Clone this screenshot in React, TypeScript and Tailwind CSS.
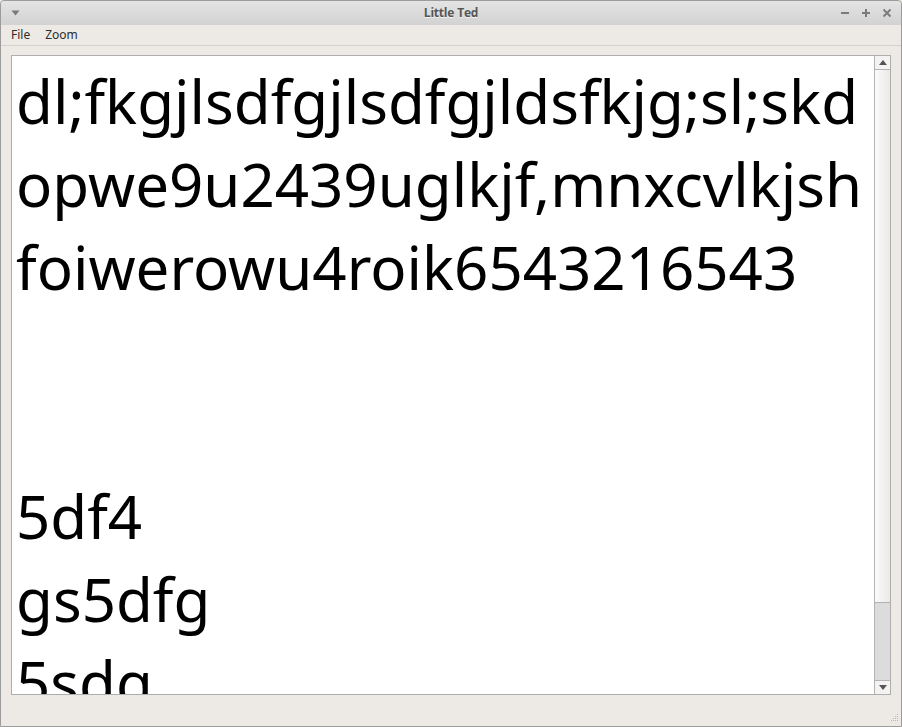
import React from "react";

const LINES = [
  "dl;fkgjlsdfgjlsdfgjldsfkjg;sl;skd",
  "opwe9u2439uglkjf,mnxcvlkjsh",
  "foiwerowu4roik6543216543",
  "",
  "",
  "5df4",
  "gs5dfg",
  "5sdg",
];

function TitleBar() {
  return (
    <div className="relative flex h-[24px] items-center bg-gradient-to-b from-[#e4e4e4] to-[#d2d2d2] rounded-t-[4px]">
      <svg className="ml-[10px]" width="9" height="6" viewBox="0 0 9 6">
        <path d="M0.5 0.5 H8.5 L4.5 5.5 Z" fill="#7a7a7a" />
      </svg>
      <div className="absolute inset-x-0 top-0 flex h-[24px] items-center justify-center text-[12px] font-bold text-[#555] [text-shadow:0_1px_0_#f2f2f2] [font-family:'Open_Sans','Noto_Sans',sans-serif] tracking-[-0.2px]">
        Little Ted
      </div>
      <div className="ml-auto mr-[9px] flex items-center gap-[11px]">
        <svg width="10" height="10" viewBox="0 0 10 10">
          <path d="M1 5 H9" stroke="#7a7a7a" strokeWidth="2" />
        </svg>
        <svg width="10" height="10" viewBox="0 0 10 10">
          <path d="M1 5 H9 M5 1 V9" stroke="#7a7a7a" strokeWidth="2" />
        </svg>
        <svg width="10" height="10" viewBox="0 0 10 10">
          <path d="M1.5 1.5 L8.5 8.5 M8.5 1.5 L1.5 8.5" stroke="#7a7a7a" strokeWidth="1.8" />
        </svg>
      </div>
    </div>
  );
}

function MenuBar() {
  return (
    <div className="flex h-[21px] items-center gap-[15px] border-b border-[#d4d0cb] px-[10px] text-[12px] text-[#2c2c2c] [font-family:'Noto_Sans',sans-serif]">
      <span>File</span>
      <span>Zoom</span>
    </div>
  );
}

function ScrollBar() {
  return (
    <div className="flex w-[16px] flex-col border-l border-[#b4b4b4] bg-[#dcdcdc]">
      <div className="flex h-[14px] items-center justify-center border-b border-[#b4b4b4] bg-[#f4f3f1]">
        <svg width="8" height="5" viewBox="0 0 8 5">
          <path d="M0 5 L4 0 L8 5 Z" fill="#555" />
        </svg>
      </div>
      <div className="h-[533px] border-b border-[#b0b0b0] bg-gradient-to-r from-[#fbfbfa] to-[#ebe9e6]" />
      <div className="flex-1" />
      <div className="flex h-[14px] items-center justify-center border-t border-[#b4b4b4] bg-[#f4f3f1]">
        <svg width="8" height="5" viewBox="0 0 8 5">
          <path d="M0 0 L8 0 L4 5 Z" fill="#555" />
        </svg>
      </div>
    </div>
  );
}

export default function App() {
  return (
    <div className="h-[727px] w-[902px] overflow-hidden bg-[#edeae6]">
      <div className="flex h-full flex-col rounded-t-[4px] border border-[#9c9c9c]">
        <TitleBar />
        <MenuBar />
        <div className="flex flex-1 flex-col px-[10px] pt-[9px] pb-[31px]">
          <div className="flex h-[640px] overflow-hidden border border-[#aeaeae] bg-white">
            <div className="flex-1 overflow-hidden pl-[4px] pt-[4px] text-[60px] leading-[83px] text-black [font-family:'Noto_Sans',sans-serif] whitespace-pre">
              {LINES.map((line, i) => (
                <div key={i} className="h-[83px]">
                  {line}
                </div>
              ))}
            </div>
            <ScrollBar />
          </div>
        </div>
      </div>
      <svg className="absolute left-[889px] top-[714px]" width="10" height="10" viewBox="0 0 10 10">
        <g fill="#b8b4ae">
          <rect x="8" y="0" width="1" height="1" />
          <rect x="6" y="2" width="1" height="1" />
          <rect x="8" y="2" width="1" height="1" />
          <rect x="4" y="4" width="1" height="1" />
          <rect x="6" y="4" width="1" height="1" />
          <rect x="8" y="4" width="1" height="1" />
          <rect x="2" y="6" width="1" height="1" />
          <rect x="4" y="6" width="1" height="1" />
          <rect x="6" y="6" width="1" height="1" />
          <rect x="8" y="6" width="1" height="1" />
        </g>
      </svg>
    </div>
  );
}
